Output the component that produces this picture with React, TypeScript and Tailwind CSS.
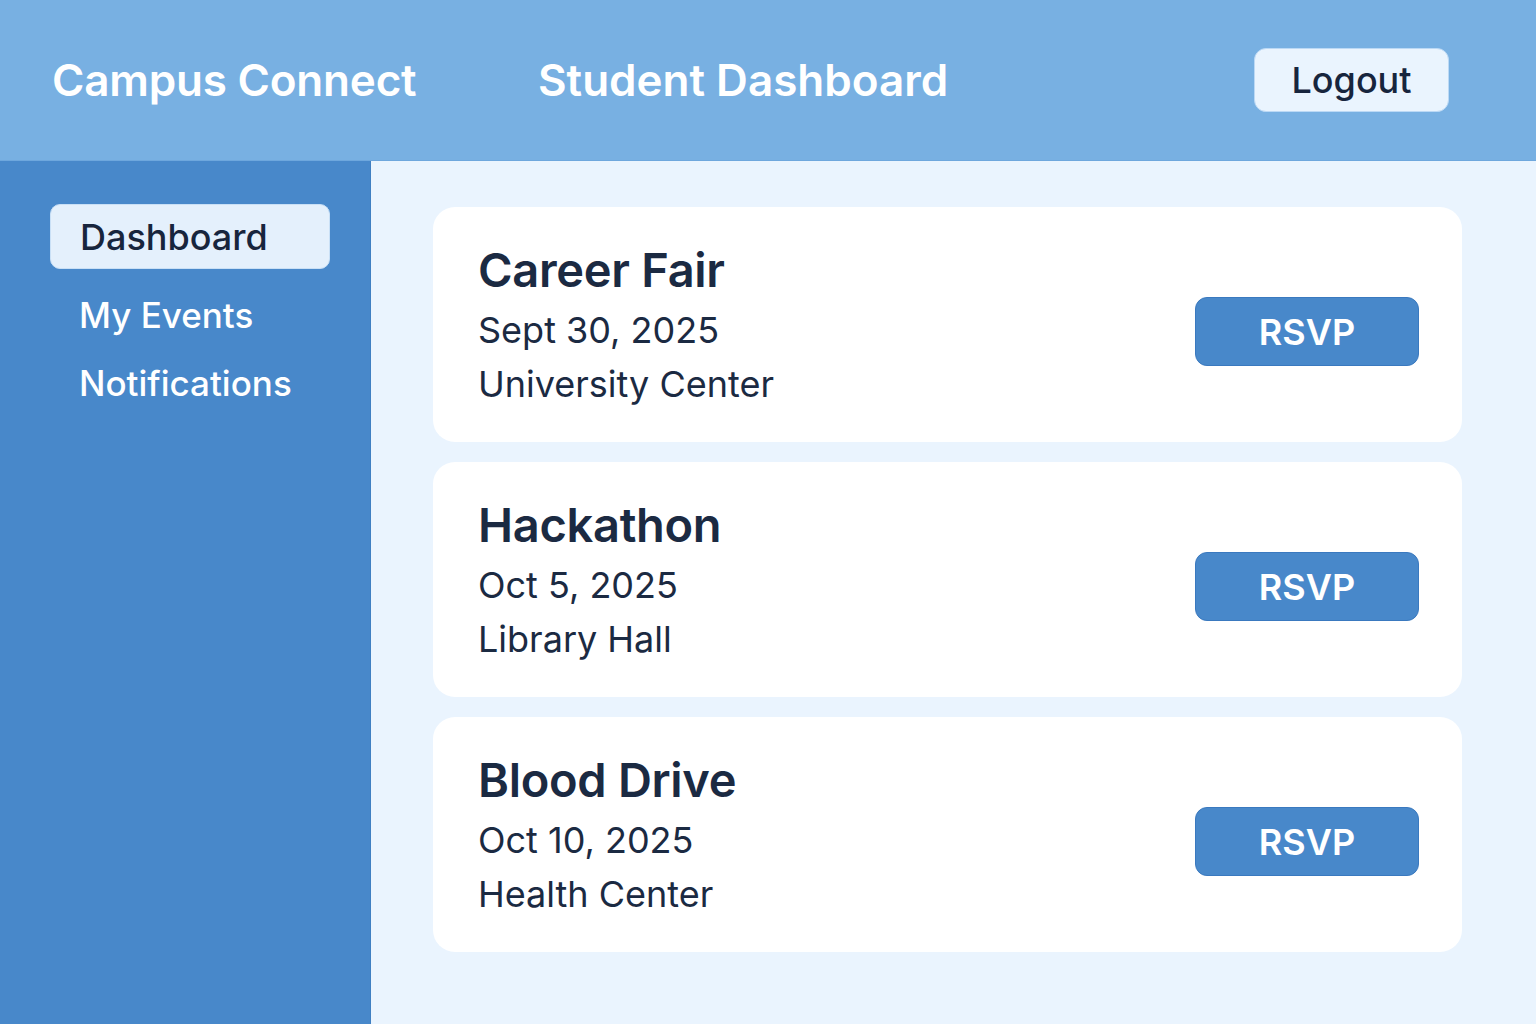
import React from 'react';

interface EventItem {
  title: string;
  date: string;
  place: string;
}

const events: EventItem[] = [
  { title: 'Career Fair', date: 'Sept 30, 2025', place: 'University Center' },
  { title: 'Hackathon', date: 'Oct 5, 2025', place: 'Library Hall' },
  { title: 'Blood Drive', date: 'Oct 10, 2025', place: 'Health Center' },
];

function EventCard({ event }: { event: EventItem }) {
  return (
    <div className="h-[235px] rounded-[22px] bg-white flex items-center justify-between pl-[45px] pr-[43px]">
      <div className="flex flex-col text-[#1b2a42] pt-[2px]">
        <span className="text-[47px] font-semibold leading-[56px] tracking-[-0.3px] mb-[4px]">{event.title}</span>
        <span className="text-[36px] leading-[56px]">{event.date}</span>
        <span className="text-[36px] leading-[52px]">{event.place}</span>
      </div>
      <button className="mt-[14px] w-[224px] h-[69px] rounded-[12px] bg-[#4888ca] border border-[#3a79bf] text-white text-[36px] font-semibold">
        RSVP
      </button>
    </div>
  );
}

export default function App() {
  return (
    <div
      className="w-[1536px] h-[1024px] flex flex-col overflow-hidden"
      style={{ fontFamily: 'Inter, "Noto Sans", sans-serif' }}
    >
      <header className="h-[161px] shrink-0 bg-[#78b0e2] flex items-center pl-[52px] pr-[87px] border-b border-[#6ea7dd]">
        <h1 className="text-[44px] font-semibold text-white tracking-[-0.2px] w-[486px]">Campus Connect</h1>
        <h2 className="text-[44px] font-semibold text-white tracking-[0px]">Student Dashboard</h2>
        <button className="ml-auto w-[195px] h-[64px] rounded-[12px] bg-[#eaf4fe] border border-[#bcd9f5] text-[36px] font-medium text-[#17253d]">
          Logout
        </button>
      </header>
      <div className="flex flex-1">
        <aside className="w-[371px] shrink-0 bg-[#4888ca] border-r border-[#3f7fc2] pt-[43px] pl-[50px]">
          <div className="w-[280px] h-[65px] rounded-[10px] bg-[#e4f0fc] border border-[#c9e0f6] flex items-center pl-[29px] text-[36px] font-medium text-[#17253d]">
            Dashboard
          </div>
          <div className="flex flex-col pl-[29px] text-white text-[35px] font-medium mt-[20px] gap-[15px]">
            <span className="leading-[53px]">My Events</span>
            <span className="leading-[53px]">Notifications</span>
          </div>
        </aside>
        <main className="flex-1 bg-[#eaf4fe] pt-[46px] pl-[62px] pr-[74px] flex flex-col gap-[20px]">
          {events.map((e) => (
            <EventCard key={e.title} event={e} />
          ))}
        </main>
      </div>
    </div>
  );
}
